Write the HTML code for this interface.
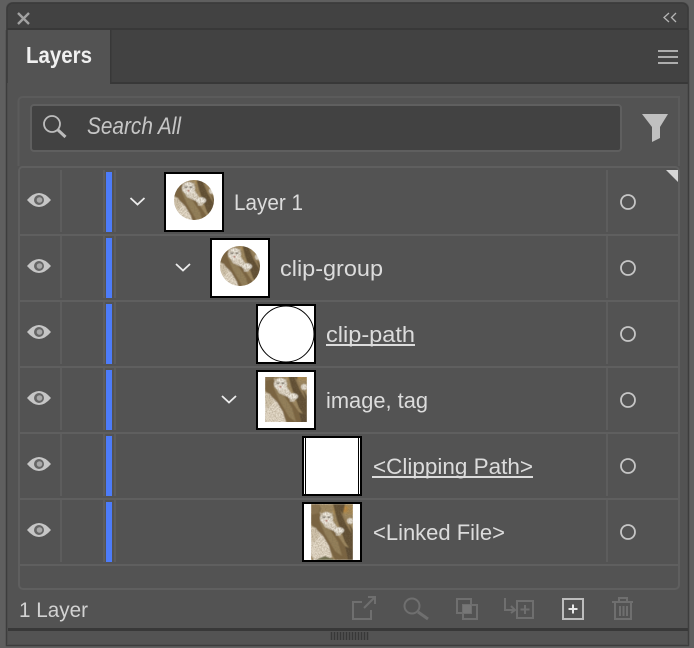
<!DOCTYPE html>
<html><head><meta charset="utf-8"><style>
html,body{margin:0;padding:0;background:#5f5f5f;width:694px;height:648px;overflow:hidden}
svg{display:block}
text{font-family:"Liberation Sans",sans-serif}
.l{font-size:22px;fill:#dcdcdc}
.u{stroke:#dcdcdc;stroke-width:2}
.d{stroke:#6f6f6f;stroke-width:2;fill:none}
</style></head><body>
<svg width="694" height="648" viewBox="0 0 694 648" xmlns="http://www.w3.org/2000/svg">
<defs>
<filter id="soft" x="-5%" y="-5%" width="110%" height="110%"><feGaussianBlur stdDeviation="0.4"/></filter>
<filter id="noise" x="0" y="0" width="100%" height="100%">
<feTurbulence type="fractalNoise" baseFrequency="0.7" numOctaves="2" seed="4"/>
<feColorMatrix values="0 0 0 0 0.2  0 0 0 0 0.15  0 0 0 0 0.08  1.6 0 0 0 -0.55"/>
</filter>
<symbol id="cat" viewBox="0 0 42 56" width="42" height="56" overflow="hidden">
<g filter="url(#soft)">
<rect width="42" height="56" fill="#a08a62"/>
<rect x="22" y="0" width="20" height="10" fill="#a88a55"/>
<circle cx="34" cy="5" r="3" fill="#bd8a40"/>
<circle cx="5" cy="5" r="5" fill="#7d6a48"/>
<path d="M0 0H9L7 12 0 16Z" fill="#8a7350"/>
<path d="M22 0H34L32 10 42 26V50L34 38 26 16Z" fill="#5f4d30"/>
<path d="M29 6L35 20 41 30 37 17Z" fill="#97805a"/>
<circle cx="39" cy="17" r="3" fill="#e8e2d6"/>
<path d="M0 11L8 9 20 22 34 42 37 56H24L14 36 0 20Z" fill="#7a6340"/>
<path d="M8 16L16 21 27 38 31 52 24 47 14 30Z" fill="#94805a"/>
<path d="M34 42L42 46V56H37Z" fill="#5a4a30"/>
<path d="M0 34L6 26 12 32 18 42 21 53 14 56H3L0 50Z" fill="#e6dccb"/>
<path d="M0 22L5 24 9 32 3 38 0 36Z" fill="#d4c7b0"/>
<path d="M4 56L14 52 24 56Z" fill="#6f7050"/>
<path d="M10 16L20 14 26 23 23 27 14 23Z" fill="#e4dccd"/>
<ellipse cx="15.500" cy="14" rx="6.500" ry="6" fill="#efeae0"/>
<path d="M9 8L12 11 10 14ZM22 8L19 11 21 14Z" fill="#cfc6b4"/>
<rect x="11.500" y="12.500" width="3" height="1.300" fill="#4a4030"/>
<rect x="16.500" y="12.500" width="3" height="1.300" fill="#4a4030"/>
<rect x="14.500" y="16" width="2" height="1.500" fill="#b0503c"/>
<ellipse cx="28" cy="26.500" rx="5" ry="3.200" fill="#f1ece2"/>
<rect x="25" y="28.500" width="4.500" height="3" fill="#d8cfbe"/>
</g>
<rect width="42" height="56" filter="url(#noise)" opacity="0.55"/>
</symbol>
<clipPath id="cc1"><circle cx="194" cy="200" r="20"/></clipPath>
<clipPath id="cc2"><circle cx="240" cy="266" r="20"/></clipPath>
<clipPath id="fr"><rect x="257" y="305" width="58" height="58"/></clipPath>
<g id="eye"><path d="M27 200Q39 186 51 200Q39 214 27 200Z" fill="#c6c6c6"/><circle cx="39" cy="200" r="5" fill="#666"/><circle cx="39.500" cy="200" r="2.800" fill="#a8a8a8"/></g>
<g id="rowlines" stroke="#5d5d5d" stroke-width="2" fill="none">
<path d="M61 170V232M104 170V232M115 170V232M607 170V232"/>
</g>
</defs>

<!-- panel -->
<rect x="6" y="2" width="683" height="644" rx="6" fill="#535353"/>
<path d="M7 30V9a6 6 0 0 1 6-6H682a6 6 0 0 1 6 6V30Z" fill="#424242"/>
<path d="M7 30V9a6 6 0 0 1 6-6H682a6 6 0 0 1 6 6V30" fill="none" stroke="#3b3b3b" stroke-width="1.500"/>
<rect x="7" y="28" width="681" height="2" fill="#383838"/>
<rect x="7" y="30" width="681" height="53" fill="#424242"/>
<rect x="111" y="82" width="577" height="2" fill="#383838"/>
<rect x="8" y="30" width="102" height="54" fill="#535353"/>
<rect x="110" y="30" width="1.500" height="54" fill="#383838"/>
<path d="M6.500 30V645.500H688.500V30" fill="none" stroke="#3d3d3d" stroke-width="1.500"/>
<rect x="8" y="628" width="680" height="3" fill="#383838"/>

<!-- title bar icons -->
<path d="M18 13L29 24M29 13L18 24" stroke="#a2a2a2" stroke-width="2.400" fill="none"/>
<path d="M669 13L664 17.500 669 22M676 13L671.500 17.500 676 22" stroke="#b5b5b5" stroke-width="1.300" fill="none"/>
<text x="26" y="63" font-size="23" font-weight="700" fill="#f0f0f0" textLength="66" lengthAdjust="spacingAndGlyphs">Layers</text>
<path d="M658 51H678M658 57H678M658 63H678" stroke="#adadad" stroke-width="2" fill="none"/>

<!-- search -->
<path d="M18.500 166V101a4 4 0 0 1 4-4H679V166" fill="none" stroke="#5b5b5b" stroke-width="2"/>
<rect x="31" y="105" width="590" height="46" rx="3" fill="#424242" stroke="#5f5f5f" stroke-width="2"/>
<circle cx="52" cy="124" r="8" fill="none" stroke="#bcbcbc" stroke-width="1.800"/>
<path d="M58 130L65.500 137" stroke="#bcbcbc" stroke-width="3" fill="none"/>
<text x="87" y="134" font-size="24" font-style="italic" fill="#c6c6c6" textLength="94" lengthAdjust="spacingAndGlyphs">Search All</text>
<path d="M642 114H668L660 127V138L652 142V127Z" fill="#c0c0c0"/>

<!-- list outline -->
<path d="M22 167H675a4 4 0 0 1 4 4V585a4 4 0 0 1-4 4H23a4 4 0 0 1-4-4V171a4 4 0 0 1 3-4Z" fill="#535353" stroke="#5f5f5f" stroke-width="2"/>
<path d="M666 170H678V182Z" fill="#d6d6d6"/>

<!-- rows grid -->
<path d="M20 235H678M20 301H678M20 367H678M20 433H678M20 499H678M20 565H678" stroke="#5f5f5f" stroke-width="2" fill="none"/>
<use href="#rowlines"/>
<use href="#rowlines" y="66"/>
<use href="#rowlines" y="132"/>
<use href="#rowlines" y="198"/>
<use href="#rowlines" y="264"/>
<use href="#rowlines" y="330"/>
<g fill="#4d7cfa">
<rect x="106" y="172" width="6" height="60"/>
<rect x="106" y="238" width="6" height="60"/>
<rect x="106" y="304" width="6" height="60"/>
<rect x="106" y="370" width="6" height="60"/>
<rect x="106" y="436" width="6" height="60"/>
<rect x="106" y="502" width="6" height="60"/>
</g>
<use href="#eye"/>
<use href="#eye" y="66"/>
<use href="#eye" y="132"/>
<use href="#eye" y="198"/>
<use href="#eye" y="264"/>
<use href="#eye" y="330"/>
<g fill="none" stroke="#c6c6c6" stroke-width="1.800">
<circle cx="628" cy="202" r="7"/>
<circle cx="628" cy="268" r="7"/>
<circle cx="628" cy="334" r="7"/>
<circle cx="628" cy="400" r="7"/>
<circle cx="628" cy="466" r="7"/>
<circle cx="628" cy="532" r="7"/>
</g>
<g fill="none" stroke="#ececec" stroke-width="1.800">
<path d="M130.500 198L137.500 204.500 144.500 198"/>
<path d="M176 264L183 270.500 190 264"/>
<path d="M222 396L229 402.500 236 396"/>
</g>

<!-- thumbnails -->
<rect x="165" y="173" width="58" height="58" fill="#fff" stroke="#000" stroke-width="2"/>
<g clip-path="url(#cc1)"><use href="#cat" x="173" y="174"/></g>
<rect x="211" y="239" width="58" height="58" fill="#fff" stroke="#000" stroke-width="2"/>
<g clip-path="url(#cc2)"><use href="#cat" x="219" y="240"/></g>
<rect x="257" y="305" width="58" height="58" fill="#fff" stroke="#000" stroke-width="2"/>
<circle cx="286" cy="334" r="28" fill="#fff" stroke="#000" stroke-width="1" clip-path="url(#fr)"/>
<rect x="257" y="371" width="58" height="58" fill="#fff" stroke="#000" stroke-width="2"/>
<svg x="265" y="377" width="42" height="45" viewBox="0 7 42 45"><use href="#cat"/></svg>
<rect x="303" y="437" width="58" height="58" fill="#fff" stroke="#000" stroke-width="2"/>
<path d="M305.500 438V494M358.500 438V494" stroke="#000" stroke-width="1"/>
<rect x="303" y="503" width="58" height="58" fill="#fff" stroke="#000" stroke-width="2"/>
<use href="#cat" x="311" y="504"/>

<!-- labels -->
<text class="l" x="234" y="210" textLength="69" lengthAdjust="spacingAndGlyphs">Layer 1</text>
<text class="l" x="280" y="276" textLength="103" lengthAdjust="spacingAndGlyphs">clip-group</text>
<text class="l" x="326" y="342" textLength="89" lengthAdjust="spacingAndGlyphs">clip-path</text>
<path class="u" d="M326 345H415"/>
<text class="l" x="326" y="408" textLength="102" lengthAdjust="spacingAndGlyphs">image, tag</text>
<text class="l" x="373" y="474" textLength="160" lengthAdjust="spacingAndGlyphs">&lt;Clipping Path&gt;</text>
<path class="u" d="M372 477H533"/>
<text class="l" x="373" y="540" textLength="132" lengthAdjust="spacingAndGlyphs">&lt;Linked File&gt;</text>

<!-- footer -->
<text x="19" y="617" font-size="21.500" fill="#d2d2d2" textLength="69" lengthAdjust="spacingAndGlyphs">1 Layer</text>
<path class="d" d="M362 602H353V619H371V610M364 608L375 597M368 597H375V604"/>
<circle class="d" cx="412" cy="606" r="7.500"/>
<path d="M418 612L428 619" stroke="#6f6f6f" stroke-width="3" fill="none"/>
<rect class="d" x="457" y="599" width="14" height="14"/>
<rect class="d" x="463" y="605" width="14" height="14"/>
<rect x="463" y="605" width="8" height="8" fill="#777"/>
<path class="d" d="M505 598V610H514M511 606L515 610 511 613"/>
<rect class="d" x="517" y="601" width="16" height="17"/>
<path class="d" d="M525 605V614M520.500 609.500H529.500"/>
<rect x="563" y="599" width="20" height="20" fill="none" stroke="#bdbdbd" stroke-width="2"/>
<path d="M573 604.500V613.500M568.500 609H577.500" stroke="#e8e8e8" stroke-width="2" fill="none"/>
<path class="d" d="M612 602H633M615 602V619H631V602M619 602V598H627V602M620 606V616M623.500 606V616M627 606V616"/>
<path d="M331.500 632V640M334.500 632V640M337.500 632V640M340.500 632V640M343.500 632V640M346.500 632V640M349.500 632V640M352.500 632V640M355.500 632V640M358.500 632V640M361.500 632V640M364.500 632V640M367.500 632V640" stroke="#383838" stroke-width="1.500" fill="none"/>
</svg>
</body></html>
